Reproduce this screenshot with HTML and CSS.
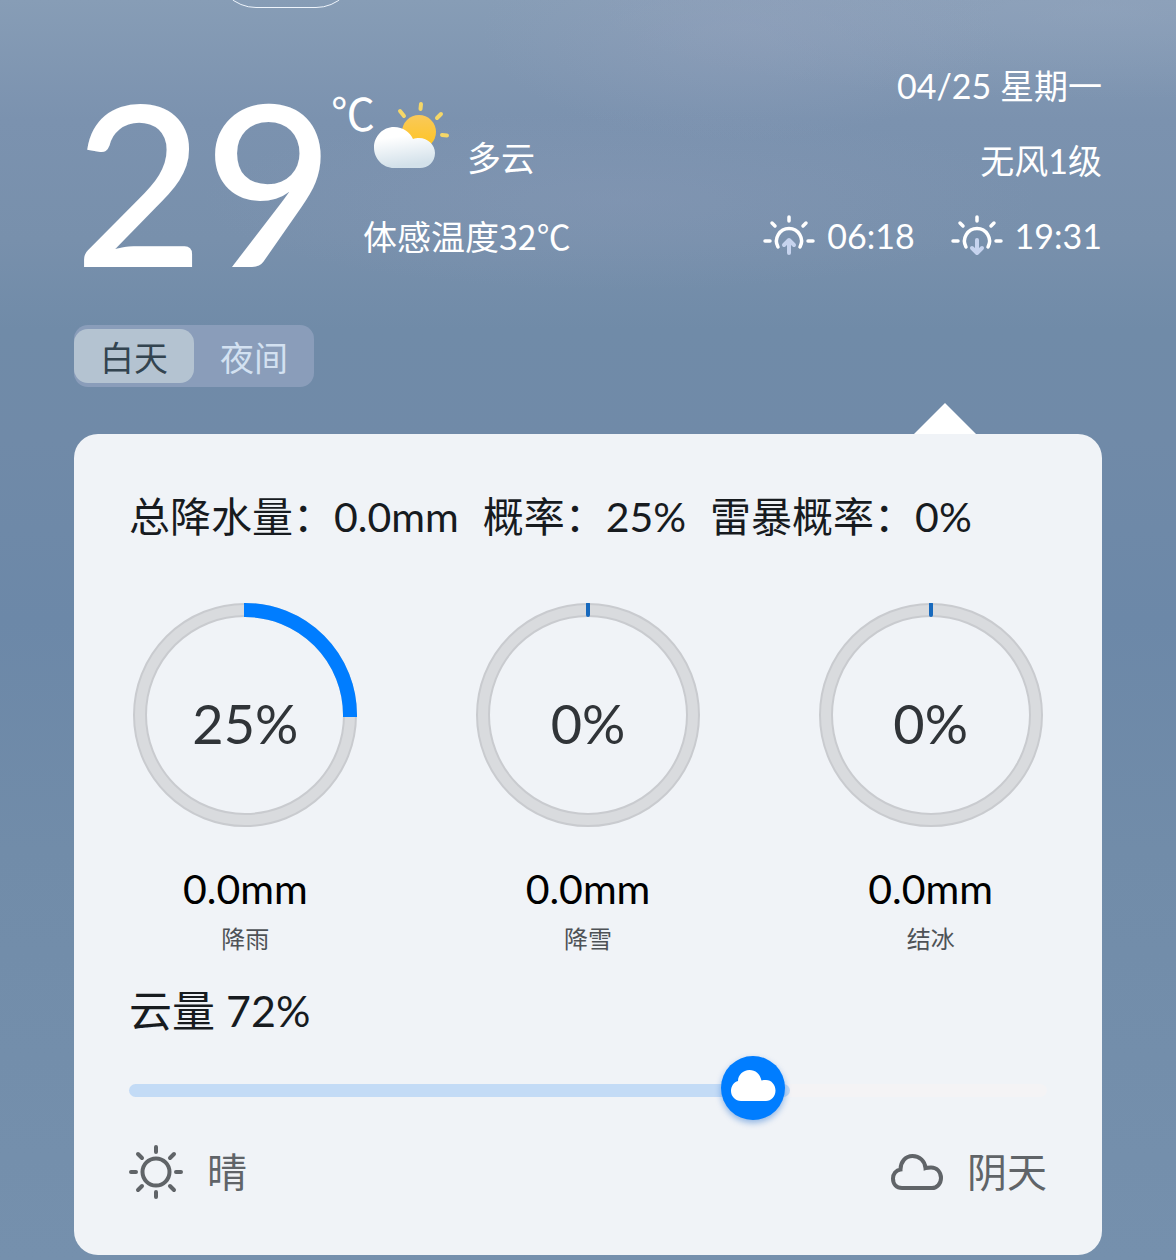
FILE: index.html
```html
<!DOCTYPE html>
<html lang="zh-CN">
	<head>
		<meta charset="utf-8">
		<meta name="viewport" content="width=device-width, initial-scale=1">
		<title>天气</title>
		<link rel="stylesheet" href="styles.css">
	</head>

	<body>
		<button class="pill" aria-label="切换"></button>

		<!--Current weather-->
		<header class="current">
			<div class="temp">29</div>
			<div class="state">
				<div class="cond">
					<span class="unit">℃</span>
					<svg class="weatherIcon" viewBox="0 0 78 70" aria-hidden="true">
						<defs>
							<linearGradient id="sunFill" x1="0" y1="0" x2="0" y2="1">
								<stop offset="0" stop-color="#f9c95a"/>
								<stop offset="1" stop-color="#ffc41f"/>
							</linearGradient>
							<linearGradient id="cloudFill" x1="0" y1="0" x2="0.2" y2="1">
								<stop offset="0.3" stop-color="#ffffff"/>
								<stop offset="1" stop-color="#d3e1ea"/>
							</linearGradient>
						</defs>
						<g stroke="#f5d768" stroke-width="4" stroke-linecap="round">
							<path d="M48 4l-.5 5M27 11l4 5M68 14l-4 4M69 35l5 .5"/>
						</g>
						<circle cx="46" cy="32" r="17" fill="url(#sunFill)"/>
						<path d="M21 27c9 0 16 5 19 12c2-1 4-1 6-1c9 0 16 7 16 15c0 9-7 15-15 15H21C10 68 1 59 1 47.500C1 36 10 27 21 27z" fill="url(#cloudFill)"/>
					</svg>
					<span class="name">多云</span>
				</div>
				<div class="feels">体感温度32℃</div>
			</div>
			<div class="info">
				<div>04/25 星期一</div>
				<div>无风1级</div>
				<div class="sunTimes">
					<span class="sunTime">
						<svg class="sunIcon" viewBox="0 0 52 44" aria-hidden="true">
							<g fill="none" stroke="#fff" stroke-width="3.500" stroke-linecap="round">
								<path d="M15 33A12.500 12.500 0 1 1 37 33"/>
								<path d="M26 3v4M9 9l3 3M43 9l-3 3M2 27h5M45 27h5"/>
							</g>
							<path d="M26 39V27M21 31l5-5l5 5" fill="none" stroke="#c6d3ee" stroke-width="4" stroke-linecap="round" stroke-linejoin="round"/>
						</svg>
						06:18
					</span>
					<span class="sunTime">
						<svg class="sunIcon" viewBox="0 0 52 44" aria-hidden="true">
							<g fill="none" stroke="#fff" stroke-width="3.500" stroke-linecap="round">
								<path d="M15 33A12.500 12.500 0 1 1 37 33"/>
								<path d="M26 3v4M9 9l3 3M43 9l-3 3M2 27h5M45 27h5"/>
							</g>
							<path d="M26 26v12M21 34l5 5l5-5" fill="none" stroke="#c6d3ee" stroke-width="4" stroke-linecap="round" stroke-linejoin="round"/>
						</svg>
						19:31
					</span>
				</div>
			</div>
		</header>

		<!--Day / night switch-->
		<div class="switch">
			<button class="active">白天</button>
			<button>夜间</button>
		</div>

		<main class="card">
			<div class="summary">
				<span>总降水量：0.0mm</span>
				<span>概率：25%</span>
				<span>雷暴概率：0%</span>
			</div>

			<div class="rings">
				<div class="ringItem">
					<div class="ring">
						<svg viewBox="0 0 224 224" aria-hidden="true">
							<circle class="edge" cx="112" cy="112" r="105"/>
							<circle class="base" cx="112" cy="112" r="105"/>
							<path class="value" d="M111 7h1a105 105 0 0 1 105 105v2"/>
						</svg>
						<span>25%</span>
					</div>
					<div class="amount">0.0mm</div>
					<div class="kind">降雨</div>
				</div>
				<div class="ringItem">
					<div class="ring">
						<svg viewBox="0 0 224 224" aria-hidden="true">
							<circle class="edge" cx="112" cy="112" r="105"/>
							<circle class="base" cx="112" cy="112" r="105"/>
							<path class="zero" d="M112 1v11"/>
						</svg>
						<span>0%</span>
					</div>
					<div class="amount">0.0mm</div>
					<div class="kind">降雪</div>
				</div>
				<div class="ringItem">
					<div class="ring">
						<svg viewBox="0 0 224 224" aria-hidden="true">
							<circle class="edge" cx="112" cy="112" r="105"/>
							<circle class="base" cx="112" cy="112" r="105"/>
							<path class="zero" d="M112 1v11"/>
						</svg>
						<span>0%</span>
					</div>
					<div class="amount">0.0mm</div>
					<div class="kind">结冰</div>
				</div>
			</div>

			<!--Cloud cover-->
			<label class="coverLabel" for="cover">云量 72%</label>
			<div class="slider">
				<div class="track"><div class="fill" style="width: 72%"></div></div>
				<input type="range" id="cover" min="0" max="100" value="72">
			</div>
			<div class="legend">
				<span>
					<svg class="clear" viewBox="0 0 54 54" aria-hidden="true">
						<circle cx="27" cy="27" r="13.500"/>
						<path d="M27 2v5M27 47v5M2 27h5M47 27h5M9 9l4 4M41 41l4 4M9 45l4-4M41 13l4-4"/>
					</svg>
					晴
				</span>
				<span>
					<svg class="overcast" viewBox="0 0 52 36" aria-hidden="true">
						<path d="M11 34C5.500 34 2 30 2 24.500C2 20 5 16 9.500 15.500C9.500 8 14.500 2 21.500 2C28.500 2 34 7 34.500 14C36 13.500 38 13.500 40 13.500C46 13.500 50 18 50 24C50 29.500 46 34 41 34z"/>
					</svg>
					阴天
				</span>
			</div>
		</main>
	</body>
</html>
```
FILE: styles.css
```css
* {
	box-sizing: border-box;
}

body {
	margin: 0;
	padding: 0 74px 5px;
	min-height: 100vh;
	overflow-x: hidden;
	font-family: Lato, "Noto Sans CJK SC", sans-serif;
	font-size: 34px;
	color: #fff;
	background:
		radial-gradient(ellipse 260px 110px at 740px 30px, rgba(150, 163, 190, 0.4), transparent),
		radial-gradient(ellipse 500px 90px at 1100px 10px, rgba(155, 170, 195, 0.35), transparent),
		radial-gradient(ellipse 420px 90px at 620px 200px, rgba(139, 155, 184, 0.35), transparent),
		linear-gradient(#879db6 0, #7b92af 120px, #7890ac 240px, #708ba8 330px, #708aa8 440px, #6c88a8 620px, #718ca9 850px, #7590ad 1260px);
}

button {
	font: inherit;
	color: inherit;
	border: none;
	padding: 0;
	background: none;
}

.pill {
	display: block;
	width: 140px;
	height: 80px;
	margin: -72px 0 0 142px;
	border: 1px solid #eef4fb;
	border-radius: 40px;
}

/*Current weather*/
.current {
	display: flex;
	margin-top: 40px;
	line-height: 75px;
}

.temp {
	width: 257px;
	font-size: 224px;
	font-weight: 500;
	line-height: 266px;
	height: 225px;
}

.cond {
	display: flex;
	height: 150px;
	align-items: flex-start;
}

.unit {
	font-family: "Noto Sans CJK SC", sans-serif;
	font-size: 44px;
	line-height: 128px;
}

.weatherIcon {
	width: 78px;
	height: 70px;
	margin: 52px 16px 0 -2px;
}

.name {
	padding-top: 72px;
}

.feels {
	padding-left: 32px;
	font-family: "Noto Sans CJK SC", sans-serif;
}

.info {
	margin-left: auto;
	text-align: right;
}

.sunTimes {
	display: flex;
	justify-content: flex-end;
	gap: 36px;
}

.sunTime {
	display: flex;
	align-items: center;
	gap: 12px;
}

.sunIcon {
	width: 52px;
	height: 44px;
}

/*Day / night switch*/
.switch {
	display: inline-flex;
	margin-top: 52px;
	padding: 4px 0;
	border-radius: 14px;
	background-color: #8a9dba;
	color: #d3e1f1;
	vertical-align: top;
}

.switch button {
	width: 120px;
	height: 54px;
	padding-top: 4px;
	line-height: 50px;
	border-radius: 14px;
}

.switch .active {
	background-color: #b4c3d1;
	color: #334450;
}

/*Details card*/
.card {
	position: relative;
	margin-top: 47px;
	padding: 48px 0 51px;
	border-radius: 24px;
	background-color: #f0f3f7;
	color: #171b1f;
}

.card::before {
	content: "";
	position: absolute;
	top: -31px;
	right: 126px;
	border: 31px solid transparent;
	border-top: 0;
	border-bottom-color: #fff;
}

.summary {
	display: flex;
	flex-wrap: wrap;
	gap: 0 24px;
	padding: 0 55px;
	font-size: 41px;
	line-height: 70px;
}

.rings {
	display: grid;
	grid-template-columns: repeat(3, 1fr);
	margin-top: 51px;
	text-align: center;
}

.ring {
	display: grid;
	justify-content: center;
	align-items: center;
	font-size: 54px;
	line-height: 60px;
	color: #303438;
}

.ring svg, .ring span {
	grid-area: 1 / 1;
}

.ring span {
	padding-top: 18px;
}

.ring svg {
	width: 224px;
	height: 224px;
	fill: none;
}

.edge {
	stroke: #c9cbcf;
	stroke-width: 14;
}

.base {
	stroke: #d9dbde;
	stroke-width: 10;
}

.value {
	stroke: #007dff;
	stroke-width: 14;
}

.zero {
	stroke: #1769bd;
	stroke-width: 4;
	stroke-linecap: round;
}

.amount {
	margin-top: 32px;
	font-size: 41px;
	line-height: 60px;
	color: #000;
}

.kind {
	font-size: 24px;
	line-height: 40px;
	color: #4e5256;
}

.coverLabel {
	display: block;
	margin-top: 22px;
	padding: 0 55px;
	font-size: 43px;
	line-height: 60px;
}

.slider {
	display: grid;
	align-items: center;
	margin: 15px 55px 0;
}

.track, .slider input {
	grid-area: 1 / 1;
}

.track {
	height: 13px;
	margin-top: 4px;
	border-radius: 7px;
	background-color: #f4f3f5;
}

.fill {
	height: 13px;
	border-radius: 7px;
	background-color: #c3dbf6;
}

.slider input {
	z-index: 1;
	width: calc(100% - 32px);
	height: 64px;
	margin: 0;
	appearance: none;
	background: none;
}

.slider input::-webkit-slider-thumb {
	appearance: none;
	width: 64px;
	height: 64px;
	border-radius: 50%;
	box-shadow: 0 3px 6px rgba(0, 90, 200, 0.4);
	background: #007dff url("data:image/svg+xml,%3Csvg xmlns='http://www.w3.org/2000/svg' viewBox='0 0 64 64'%3E%3Cpath fill='%23fff' d='M20 45C14.500 45 10 40.500 10 35C10 30 13 26 17 25C17 19 22 14 28.500 14C34.500 14 39 18 40.500 24.500C42 24 43.500 24 45 24C50.500 24 54.500 29 54.500 34.500C54.500 40.500 50 45 45 45z'/%3E%3C/svg%3E") center / 64px 64px;
}

.legend {
	display: flex;
	justify-content: space-between;
	margin-top: 20px;
	padding: 0 55px;
	font-size: 40px;
	line-height: 64px;
	color: #606468;
}

.legend span {
	display: flex;
	align-items: center;
	gap: 24px;
}

.legend svg {
	fill: none;
	stroke: #606468;
	stroke-width: 4;
	stroke-linecap: round;
}

.clear {
	width: 54px;
	height: 54px;
}

.overcast {
	width: 52px;
	height: 36px;
}
```
